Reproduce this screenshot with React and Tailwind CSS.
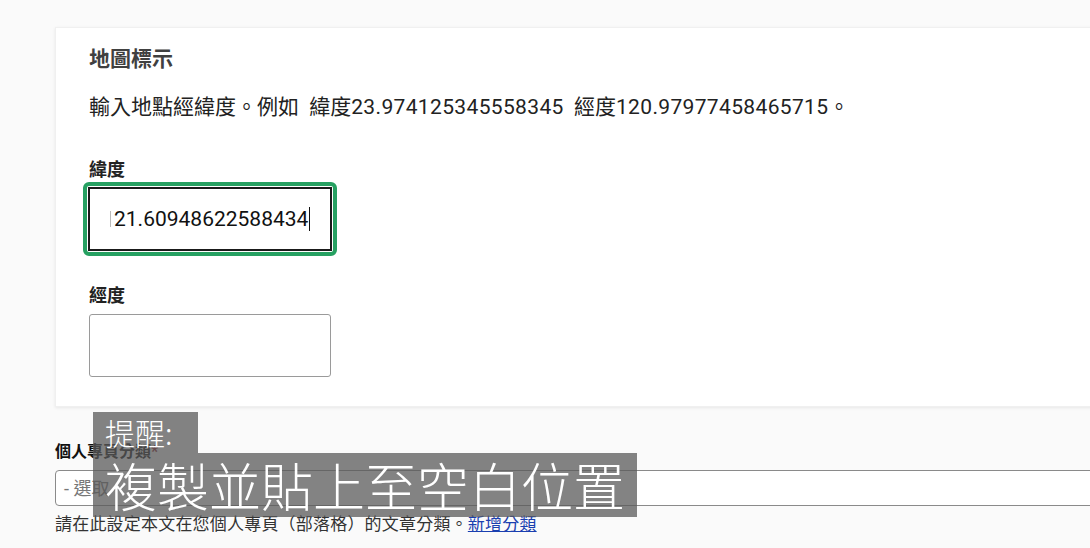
export default function App() {
  const font = { fontFamily: 'Roboto, "Noto Sans CJK TC", sans-serif' };
  return (
    <div className="relative w-[1090px] h-[548px] overflow-hidden bg-[#fafafa]" style={font}>
      <div className="pl-[55px] pt-[27px]">
        <div className="w-[1100px] h-[380px] bg-white border border-[#f0f0f0] shadow-[0_1px_3px_rgba(0,0,0,0.08)] pl-[33px] pt-[17px]">
          <div className="text-[21px] leading-[28px] font-bold text-[#404040]">地圖標示</div>
          <div className="mt-[20px] text-[21px] leading-[28px] text-[#222] [word-spacing:5px]">
            輸入地點經緯度。例如 緯度<span className="tracking-[0.35px]">23.974125345558345</span> 經度<span className="tracking-[0.35px]">120.97977458465715</span>。
          </div>
          <div className="mt-[38px] text-[18px] leading-[22px] font-bold text-[#222]">緯度</div>
          <div className="mt-[1px] ml-[-6px] w-[254px] h-[74px] rounded-[6px] border-[4px] border-[#26a061] p-[1px]">
            <div className="w-full h-full border-[2px] border-[#1a1a1a] flex items-center pl-[20px]">
              <span className="w-[1px] h-[16px] bg-[#bbb] mr-[3px]"></span>
              <span className="text-[21px] text-[#111] leading-none">21.60948622588434</span>
              <span className="w-[1px] h-[24px] bg-[#111] ml-[1px]"></span>
            </div>
          </div>
          <div className="mt-[29px] text-[18px] leading-[22px] font-bold text-[#222]">經度</div>
          <div className="mt-[7px] w-[242px] h-[63px] rounded-[3px] border border-[#9a9a9a] bg-white"></div>
        </div>
        <div className="mt-[35px] text-[16px] leading-[20px] font-bold text-[#111]">
          個人專頁分類<span className="text-[#8b1a2b]">*</span>
        </div>
        <div className="mt-[8px] w-[1100px] h-[36px] rounded-[4px] border border-[#8a8a8a] bg-white flex items-center pl-[8px] text-[18px] text-[#777]">
          - 選取 -
        </div>
        <div className="mt-[7px] text-[17px] leading-[22px] text-[#333] tracking-[0.2px]">
          請在此設定本文在您個人專頁（部落格）的文章分類。<a className="text-[#1a3fb0] underline">新增分類</a>
        </div>
      </div>
      <div className="absolute left-[93px] top-[412px] w-[105px] h-[41px] bg-[rgba(90,90,90,0.75)] text-white text-[30px] leading-[41px] font-light pl-[12px]" style={{ fontFamily: '"Noto Sans CJK TC", sans-serif' }}>
        提醒:
      </div>
      <div className="absolute left-[93px] top-[453px] w-[544px] h-[64px] bg-[rgba(90,90,90,0.75)] text-white text-[52px] leading-[64px] font-light pl-[12px] whitespace-nowrap" style={{ fontFamily: '"Noto Sans CJK TC", sans-serif' }}>
        複製並貼上至空白位置
      </div>
    </div>
  );
}
